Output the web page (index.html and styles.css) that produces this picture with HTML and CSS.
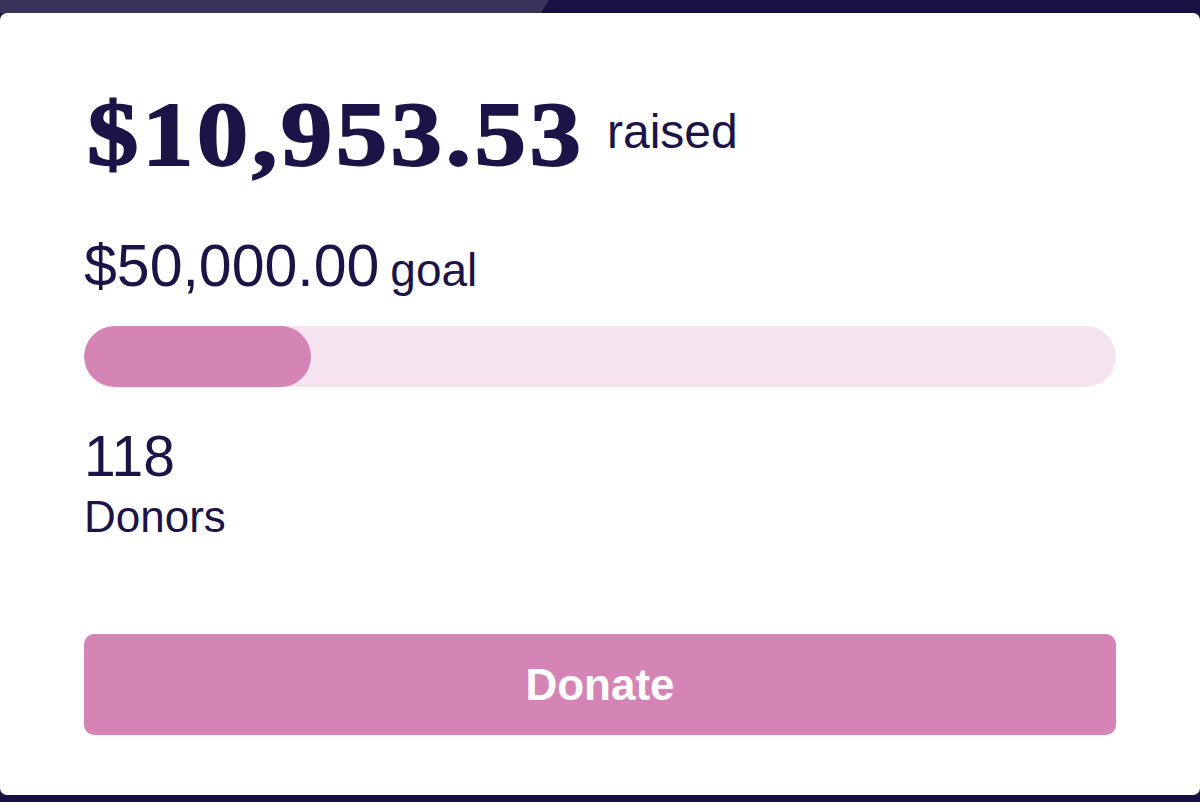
FILE: index.html
```html
<!DOCTYPE html>
<html lang="en">
<head>
<meta charset="utf-8">
<title>Fundraiser</title>
<link rel="stylesheet" href="styles.css">
</head>
<body>
<div class="page">
  <div class="top-strip"></div>
  <main class="card">
    <h1 class="raised"><span class="raised-amount">$10,953.53</span><span class="raised-label">raised</span></h1>
    <p class="goal"><span class="goal-amount">$50,000.00</span><span class="goal-label">goal</span></p>
    <div class="progress"><div class="progress-fill" style="width: 22%"></div></div>
    <div class="donors">
      <div class="donors-count">118</div>
      <div class="donors-label">Donors</div>
    </div>
    <button class="donate" type="button">Donate</button>
  </main>
  <div class="bottom-strip"></div>
</div>
</body>
</html>
```

FILE: styles.css
```css
html, body {
  margin: 0;
  padding: 0;
  height: 100%;
  overflow: hidden;
  background: #1a1042;
}

.page {
  display: flex;
  flex-direction: column;
  height: 802px;
  color: #1c1447;
  font-family: "Liberation Sans", Arial, Helvetica, sans-serif;
}

.top-strip {
  height: 13px;
  flex: none;
  background: linear-gradient(122deg, #3c335b 0, #3c335b 465px, #1a1042 466px, #1a1042 100%);
}

.bottom-strip {
  height: 7px;
  flex: none;
  background: #1a1042;
}

.card {
  flex: 1;
  background: #ffffff;
  border-radius: 7px;
  padding: 75px 84px 60px;
  display: flex;
  flex-direction: column;
  box-sizing: border-box;
}

.raised {
  margin: 0;
  font-weight: normal;
  height: 92px;
  display: flex;
  align-items: center;
}

.raised-amount {
  display: inline-block;
  font-family: "Liberation Serif", "Times New Roman", serif;
  font-weight: 700;
  font-size: 92px;
  line-height: 92px;
  letter-spacing: 3px;
  -webkit-text-stroke: 1.8px #1c1447;
  margin-left: 3px;
  transform: scaleX(1.12);
  transform-origin: left center;
}

.raised-label {
  font-size: 48px;
  line-height: 48px;
  margin-left: 76px;
  margin-bottom: 4px;
}

.goal {
  margin: 57px 0 0;
  display: flex;
  align-items: baseline;
  line-height: 59px;
}

.goal-amount {
  font-size: 59px;
  line-height: 59px;
}

.goal-label {
  font-size: 46px;
  line-height: 46px;
  margin-left: 11px;
}

.progress {
  margin-top: 30px;
  height: 61px;
  border-radius: 31px;
  background: #f6e3f0;
  overflow: hidden;
}

.progress-fill {
  height: 100%;
  border-radius: 31px;
  background: #d485b5;
}

.donors {
  margin-top: 41px;
  display: flex;
  flex-direction: column;
  gap: 11px;
}

.donors-count {
  font-size: 57px;
  line-height: 56px;
}

.donors-label {
  font-size: 44px;
  line-height: 44px;
}

.donate {
  margin-top: auto;
  height: 101px;
  border: none;
  border-radius: 10px;
  background: #d485b5;
  color: #ffffff;
  font-family: "Liberation Sans", Arial, Helvetica, sans-serif;
  font-weight: 700;
  font-size: 44px;
  padding: 0;
  cursor: pointer;
}
```
